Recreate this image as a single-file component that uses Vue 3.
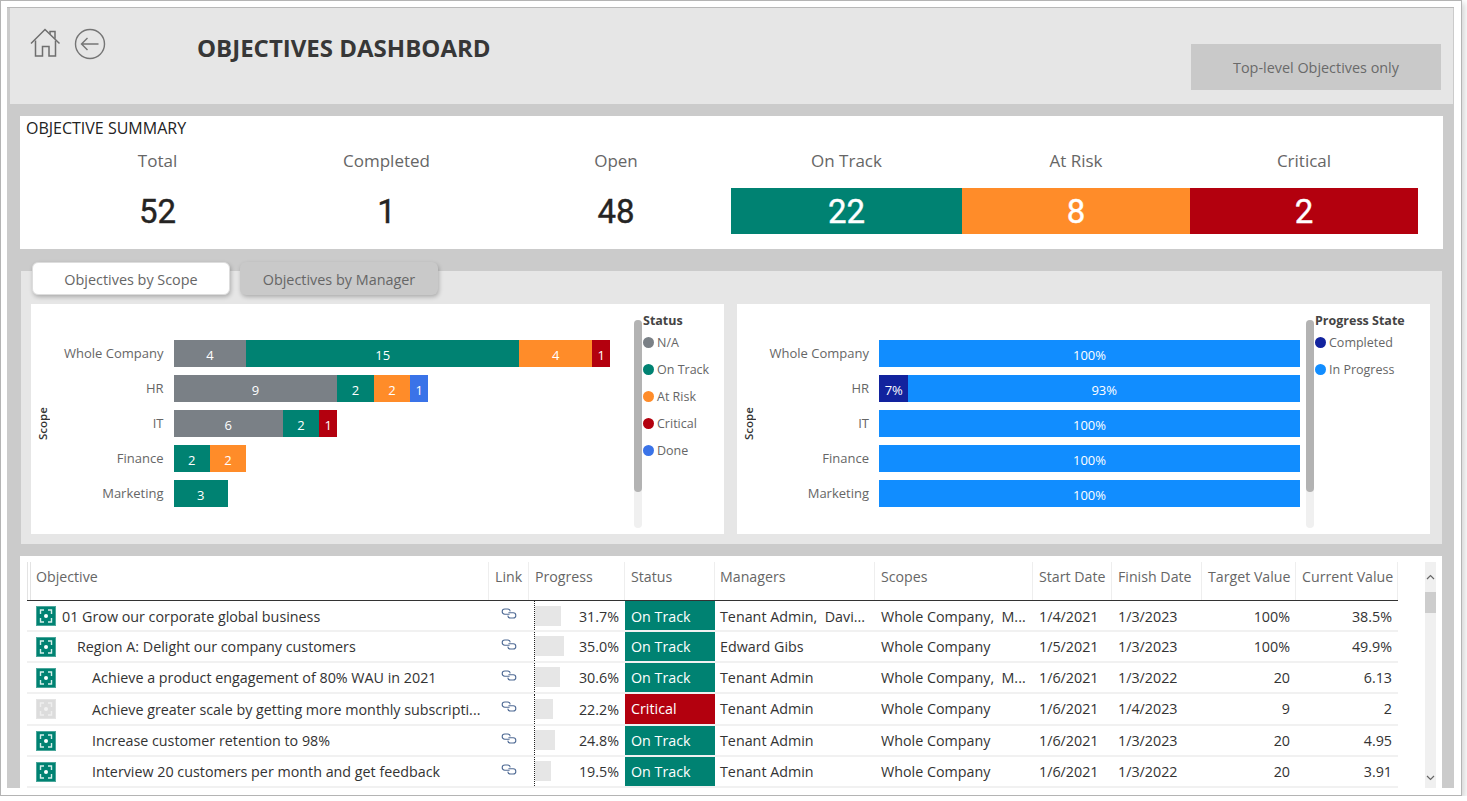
<script setup>
const UNIT = 18.2
const summary = [
  { label: 'Total', value: '52', cls: 'plain', w: 229 },
  { label: 'Completed', value: '1', cls: 'plain', w: 229 },
  { label: 'Open', value: '48', cls: 'plain', w: 230 },
  { label: 'On Track', value: '22', cls: 'track', w: 231 },
  { label: 'At Risk', value: '8', cls: 'risk', w: 228 },
  { label: 'Critical', value: '2', cls: 'crit', w: 228 }
]
const scopeRows = [
  { name: 'Whole Company', segs: [[4, 'na'], [15, 'track'], [4, 'risk'], [1, 'crit']] },
  { name: 'HR', segs: [[9, 'na'], [2, 'track'], [2, 'risk'], [1, 'done']] },
  { name: 'IT', segs: [[6, 'na'], [2, 'track'], [1, 'crit']] },
  { name: 'Finance', segs: [[2, 'track'], [2, 'risk']] },
  { name: 'Marketing', segs: [[3, 'track']] }
]
const statusLegend = [['N/A', 'na'], ['On Track', 'track'], ['At Risk', 'risk'], ['Critical', 'crit'], ['Done', 'done']]
const progressRows = [
  { name: 'Whole Company', segs: [[100, 'prog']] },
  { name: 'HR', segs: [[7, 'comp'], [93, 'prog']] },
  { name: 'IT', segs: [[100, 'prog']] },
  { name: 'Finance', segs: [[100, 'prog']] },
  { name: 'Marketing', segs: [[100, 'prog']] }
]
const progressLegend = [['Completed', 'comp'], ['In Progress', 'prog']]
const columns = ['Objective', 'Link', 'Progress', 'Status', 'Managers', 'Scopes', 'Start Date', 'Finish Date', 'Target Value', 'Current Value']
const rows = [
  { h: 31, lvl: 0, icon: 'on', name: '01 Grow our corporate global business', bar: 26, pct: '31.7%', st: 'On Track', cls: 'track', mgr: 'Tenant Admin,  Davi...', scope: 'Whole Company,  M...', start: '1/4/2021', end: '1/3/2023', tv: '100%', cv: '38.5%' },
  { h: 31, lvl: 1, icon: 'on', name: 'Region A: Delight our company customers', bar: 29, pct: '35.0%', st: 'On Track', cls: 'track', mgr: 'Edward Gibs', scope: 'Whole Company', start: '1/5/2021', end: '1/3/2023', tv: '100%', cv: '49.9%' },
  { h: 31, lvl: 2, icon: 'on', name: 'Achieve a product engagement of 80% WAU in 2021', bar: 25, pct: '30.6%', st: 'On Track', cls: 'track', mgr: 'Tenant Admin', scope: 'Whole Company,  M...', start: '1/6/2021', end: '1/3/2022', tv: '20', cv: '6.13' },
  { h: 32, lvl: 2, icon: 'off', name: 'Achieve greater scale by getting more monthly subscripti...', bar: 18, pct: '22.2%', st: 'Critical', cls: 'crit', mgr: 'Tenant Admin', scope: 'Whole Company', start: '1/6/2021', end: '1/4/2023', tv: '9', cv: '2' },
  { h: 31, lvl: 2, icon: 'on', name: 'Increase customer retention to 98%', bar: 20, pct: '24.8%', st: 'On Track', cls: 'track', mgr: 'Tenant Admin', scope: 'Whole Company', start: '1/6/2021', end: '1/3/2023', tv: '20', cv: '4.95' },
  { h: 31, lvl: 2, icon: 'on', name: 'Interview 20 customers per month and get feedback', bar: 16, pct: '19.5%', st: 'On Track', cls: 'track', mgr: 'Tenant Admin', scope: 'Whole Company', start: '1/6/2021', end: '1/3/2022', tv: '20', cv: '3.91' }
]
</script>

<template>
  <div class="shot">
    <div class="report">
      <header class="head">
        <div class="icons">
          <svg class="home" width="32" height="30" viewBox="0 0 32 30" fill="none" stroke="#6e6e6e" stroke-width="1.5">
            <path d="M1 15.5 15 1.5 29.5 15.5" />
            <path d="M20 6V3.5h5v7.3" />
            <path d="M5.5 12.5V28H12.5V18.5H19V28H25.5V12.5" />
          </svg>
          <svg class="back" width="32" height="32" viewBox="0 0 32 32" fill="none" stroke="#757575" stroke-width="1.4">
            <circle cx="16" cy="16" r="14.5" />
            <path d="M24.5 16H7.5M13.5 10 7.5 16 13.5 22" />
          </svg>
        </div>
        <h1 class="title">OBJECTIVES DASHBOARD</h1>
        <button class="toggle" type="button">Top-level Objectives only</button>
      </header>

      <section class="summary">
        <div class="sum-title">OBJECTIVE SUMMARY</div>
        <div class="sum-grid">
          <div v-for="s in summary" :key="s.label" class="sum-col" :style="{ width: s.w + 'px' }">
            <div class="sum-label">{{ s.label }}</div>
            <div class="sum-value" :class="s.cls">{{ s.value }}</div>
          </div>
        </div>
      </section>

      <section class="charts">
        <div class="tabs">
          <div class="tab active">Objectives by Scope</div>
          <div class="tab">Objectives by Manager</div>
        </div>
        <div class="chart-row">
          <div class="chart left">
            <div class="axis-title"><span>Scope</span></div>
            <div class="plot">
              <div v-for="r in scopeRows" :key="r.name" class="bar-row">
                <div class="cat">{{ r.name }}</div>
                <div class="bar">
                  <div v-for="(g, i) in r.segs" :key="i" class="seg" :class="g[1]" :style="{ width: g[0] * UNIT + 'px' }">{{ g[0] }}</div>
                </div>
              </div>
            </div>
            <div class="legend-scroll"><div class="legend-thumb"></div></div>
            <div class="legend">
              <div class="legend-title">Status</div>
              <div v-for="l in statusLegend" :key="l[0]" class="legend-item">
                <span class="dot" :class="l[1]"></span>{{ l[0] }}
              </div>
            </div>
          </div>
          <div class="chart right">
            <div class="axis-title"><span>Scope</span></div>
            <div class="plot">
              <div v-for="r in progressRows" :key="r.name" class="bar-row">
                <div class="cat">{{ r.name }}</div>
                <div class="bar wide">
                  <div v-for="(g, i) in r.segs" :key="i" class="seg" :class="g[1]" :style="{ width: g[0] + '%' }">{{ g[0] }}%</div>
                </div>
              </div>
            </div>
            <div class="legend-scroll"><div class="legend-thumb"></div></div>
            <div class="legend">
              <div class="legend-title">Progress State</div>
              <div v-for="l in progressLegend" :key="l[0]" class="legend-item">
                <span class="dot" :class="l[1]"></span>{{ l[0] }}
              </div>
            </div>
          </div>
        </div>
      </section>

      <section class="table-card">
        <div class="table">
          <div class="t-row t-head">
            <div v-for="c in columns" :key="c" class="th">{{ c }}</div>
          </div>
          <div v-for="r in rows" :key="r.name" class="t-row t-body" :style="{ height: r.h + 'px' }">
            <div class="td obj">
              <svg class="okr" :class="r.icon" width="20" height="20" viewBox="0 0 20 20" fill="none">
                <rect x="0.5" y="0.5" width="19" height="19" />
                <path class="mark" d="M8 4H4.5V8M12 4H15.5V8M8 16H4.5V12M12 16H15.5V12" stroke-width="1.4" />
                <circle class="pip" cx="10" cy="10" r="2" />
              </svg>
              <span class="obj-name" :class="'lvl' + r.lvl">{{ r.name }}</span>
            </div>
            <div class="td link">
              <svg width="16" height="11" viewBox="0 0 16 11" fill="none" stroke="#4f6a94" stroke-width="1.1">
                <path d="M8.6 6.2H3.8A2.6 2.6 0 0 1 3.8 1H6.6A2.6 2.6 0 0 1 9.2 3.4" />
                <path d="M7.4 4.8H12.2A2.6 2.6 0 0 1 12.2 10H9.4A2.6 2.6 0 0 1 6.8 7.6" />
              </svg>
            </div>
            <div class="td prog">
              <div class="prog-bar" :style="{ width: r.bar + 'px' }"></div>
              <span class="prog-val">{{ r.pct }}</span>
            </div>
            <div class="td st" :class="r.cls">{{ r.st }}</div>
            <div class="td mgr">{{ r.mgr }}</div>
            <div class="td">{{ r.scope }}</div>
            <div class="td">{{ r.start }}</div>
            <div class="td">{{ r.end }}</div>
            <div class="td num">{{ r.tv }}</div>
            <div class="td num">{{ r.cv }}</div>
          </div>
          <div class="t-row t-body tail">
            <div class="td"></div><div class="td"></div><div class="td prog"></div>
            <div class="td st track"></div>
          </div>
        </div>
        <div class="vscroll">
          <svg width="11" height="8" viewBox="0 0 11 8" fill="none" stroke="#666" stroke-width="1.2"><path d="M2 6 5.5 2.5 9 6" /></svg>
          <div class="vthumb"></div>
          <svg class="down" width="11" height="8" viewBox="0 0 11 8" fill="none" stroke="#666" stroke-width="1.2"><path d="M2 2 5.5 5.5 9 2" /></svg>
        </div>
      </section>
    </div>
  </div>
</template>

<style scoped>
.shot {
  box-sizing: border-box;
  width: 1462px;
  height: 796px;
  border: 1px solid #b4b4b4;
  padding: 6px 7px 7px 6px;
  background: #fff;
  box-shadow: 3px 3px 6px rgba(0, 0, 0, 0.16);
  font-family: "Open Sans", "Noto Sans", sans-serif;
  overflow: hidden;
}
.report {
  box-sizing: border-box;
  width: 1447px;
  height: 781px;
  background: #cbcbcb;
  border-top: 1px solid #b8b8b8;
  padding-right: 1px;
  overflow: hidden;
}
.head {
  height: 96px;
  margin-left: 3px;
  background: #e6e6e6;
  display: flex;
  align-items: flex-start;
}
.icons {
  display: flex;
  align-items: flex-start;
  margin: 20px 0 0 20px;
  width: 167px;
}
.back { margin: 0 0 0 12px; }
.title {
  margin: 26px 0 0;
  font-size: 24px;
  line-height: 28px;
  font-weight: 700;
  color: #373737;
  letter-spacing: 0;
}
.toggle {
  margin: 36px 12px 0 auto;
  width: 250px;
  height: 46px;
  background: #c9c9c9;
  border: 0;
  font: 14.4px "Open Sans", sans-serif;
  color: #6a6a6a;
  padding: 0;
}
.summary {
  box-sizing: border-box;
  height: 133px;
  margin: 12px 10px 0 13px;
  background: #fff;
  padding-top: 2px;
}
.sum-title {
  margin-left: 6px;
  font-size: 16px;
  line-height: 20px;
  color: #222;
}
.sum-grid {
  display: flex;
  margin: 0 0 0 23px;
}
.sum-col { text-align: center; }
.sum-label {
  margin-top: 11px;
  font-size: 17px;
  line-height: 24px;
  color: #666;
}
.sum-value {
  margin-top: 15px;
  height: 46px;
  line-height: 48px;
  font-family: Roboto, sans-serif;
  font-size: 33px;
  font-weight: 400;
  -webkit-text-stroke: 0.4px currentColor;
  color: #252423;
}
.sum-value.plain { background: transparent; }
.track { background: #008272; color: #fff; }
.risk { background: #ff8c29; color: #fff; }
.crit { background: #b3000e; color: #fff; }
.na { background: #7a8086; color: #fff; }
.done { background: #3a73e8; color: #fff; }
.prog { background: #118dff; color: #fff; }
.comp { background: #12239e; color: #fff; }
.sum-value.track, .sum-value.risk, .sum-value.crit { color: #fff; }

.charts {
  box-sizing: border-box;
  height: 273px;
  margin: 22px 11px 0 14px;
  background: #e6e6e6;
  display: flow-root;
}
.tabs {
  display: flex;
  gap: 10px;
  margin: -9px 0 0 11px;
  height: 33px;
}
.tab {
  box-sizing: border-box;
  width: 198px;
  height: 33px;
  border-radius: 6px;
  background: #c9c9c9;
  color: #666;
  font-size: 14.4px;
  line-height: 35px;
  text-align: center;
  box-shadow: 1px 2px 4px rgba(0, 0, 0, 0.25);
}
.tab.active { background: #fff; border: 1px solid #ddd; line-height: 33px; }
.chart-row {
  display: flex;
  gap: 13px;
  margin: 9px 12px 0 10px;
}
.chart {
  display: flex;
  height: 230px;
  background: #fff;
  box-sizing: border-box;
  width: 693px;
}
.axis-title {
  width: 24px;
  display: flex;
  align-items: flex-start;
  justify-content: center;
  padding-top: 102px;
  box-sizing: border-box;
  flex: none;
}
.axis-title span {
  writing-mode: vertical-rl;
  transform: rotate(180deg);
  font-size: 11.5px;
  font-weight: 600;
  color: #333;
  height: 36px;
  line-height: 22px;
  text-align: center;
}
.plot {
  padding-top: 36px;
  display: flex;
  flex-direction: column;
  gap: 8px;
  flex: none;
}
.left .plot { width: 579px; }
.right .plot { width: 545px; }
.bar-row {
  display: flex;
  height: 27px;
  align-items: stretch;
}
.cat {
  padding-right: 10px;
  box-sizing: border-box;
  text-align: right;
  font-size: 13px;
  line-height: 26px;
  color: #666;
  white-space: nowrap;
  flex: none;
  width: 118px;
}
.left .cat { width: 118.5px; }
.bar { display: flex; flex: none; }
.bar.wide { width: 421px; }
.seg {
  font-size: 13px;
  line-height: 30px;
  text-align: center;
  flex: none;
  overflow: hidden;
}
.legend-scroll {
  width: 8px;
  height: 208px;
  margin-top: 16px;
  background: #f0f0f0;
  border-radius: 4px;
  flex: none;
}
.legend-thumb {
  height: 172px;
  background: #b3b3b3;
  border-radius: 4px;
}
.legend {
  margin-left: 1px;
  padding-top: 9px;
  white-space: nowrap;
}
.legend-title {
  font-size: 12.5px;
  font-weight: 700;
  line-height: 16px;
  color: #444;
}
.legend-item {
  display: flex;
  align-items: center;
  height: 27px;
  font-size: 12.5px;
  color: #666;
}
.dot {
  width: 11px;
  height: 11px;
  border-radius: 50%;
  margin-right: 3px;
  flex: none;
}

.table-card {
  box-sizing: border-box;
  height: 232px;
  margin: 12px 11px 0 13px;
  background: #fff;
  padding: 6px 0 0 7px;
  display: flex;
}
.table { width: 1371px; flex: none; overflow: hidden; height: 226px; }
.t-row {
  display: grid;
  grid-template-columns: 462px 40px 96px 90px 160px 158px 79px 90px 94px 102px;
}
.t-head {
  height: 39px;
  border-bottom: 1px solid #333;
  box-sizing: border-box;
}
.th {
  font-size: 14.2px;
  line-height: 29px;
  color: #666;
  padding-left: 6px;
  border-right: 1px solid #eee;
  box-sizing: border-box;
  white-space: nowrap;
}
.th:first-child {
  padding-left: 5px;
  border-left: 4px double #e3e3e3;
}
.th:nth-child(5) { padding-left: 5px; }
.t-body {
  box-sizing: border-box;
  border-bottom: 2px solid #f1f1f1;
}
.td {
  font-size: 14.3px;
  line-height: 29px;
  color: #333;
  padding-left: 6px;
  white-space: pre;
  overflow: hidden;
  box-sizing: border-box;
}
.td.mgr { padding-left: 5px; }
.t-head + .t-body .td:not(.prog):not(.obj):not(.link) { padding-top: 1px; }
.t-head + .t-body .td.obj, .t-head + .t-body .td.prog { padding-top: 1px; }
.obj {
  display: flex;
  align-items: center;
  padding-left: 9px;
}
.obj-name { margin-left: 6px; }
.obj-name.lvl1 { margin-left: 21px; }
.obj-name.lvl2 { margin-left: 36px; }
.okr { flex: none; }
.okr rect { fill: #008272; stroke: #4ba79b; }
.okr .mark { stroke: #d6f0eb; }
.okr .pip { fill: #fff; }
.okr.off rect { fill: #dcdcdc; stroke: #e4e4e4; }
.okr.off .mark { stroke: #eee; }
.okr.off .pip { fill: #f1f1f1; }
.link { display: flex; justify-content: center; padding: 0; align-items: flex-start; }
.link svg { margin-top: 7px; }
.td.prog {
  background: transparent;
  border-left: 1px dotted #222;
  margin-left: 5px;
  padding: 0 6px 0 0;
  display: flex;
  align-items: center;
  justify-content: space-between;
}
.prog-bar { height: 20px; background: #e6e6e6; margin-top: -1px; }
.prog-val { color: #333; }
.td.st { color: #fff; padding-left: 6px; }
.td.st.track { background: #008272; }
.td.st.crit { background: #b3000e; }
.td.num { text-align: right; padding: 0 6px 0 0; }
.tail { height: 12px; border: 0; }
.vscroll {
  width: 11px;
  height: 226px;
  margin-left: 27px;
  background: #f0f0f0;
  display: flex;
  flex-direction: column;
  align-items: center;
  flex: none;
}
.vscroll svg:first-child { margin-top: 11px; }
.vthumb {
  width: 11px;
  height: 21px;
  background: #cdcdcd;
  margin-top: 11px;
}
.vscroll .down { margin-top: auto; margin-bottom: 6px; }
</style>

<style>
html, body { margin: 0; background: #fff; overflow: hidden; }
</style>
